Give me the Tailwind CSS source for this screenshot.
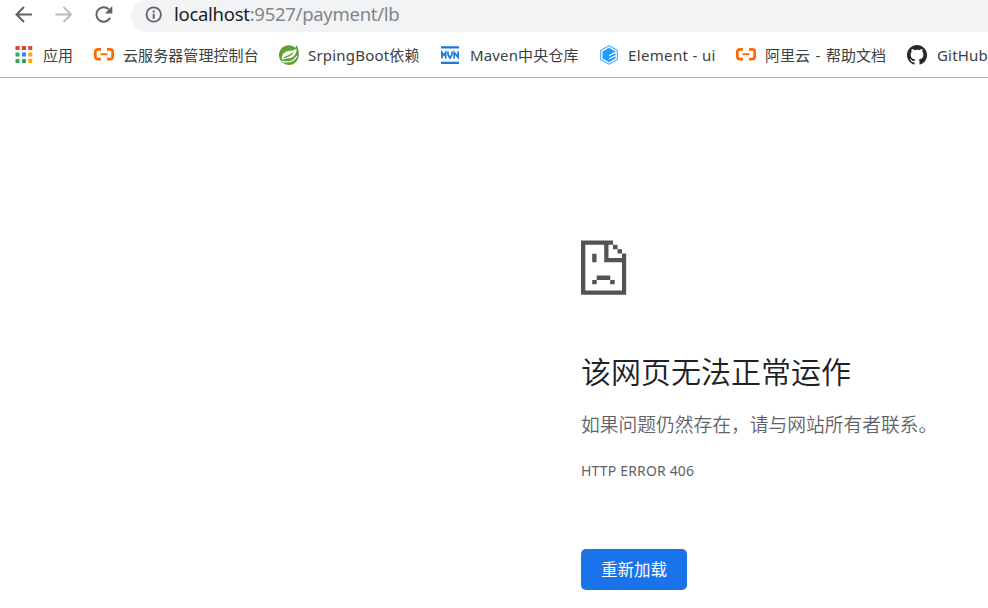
<!DOCTYPE html>
<html lang="zh-CN">
<head>
<meta charset="utf-8">
<title>localhost</title>
<script src="https://cdn.jsdelivr.net/npm/@tailwindcss/browser@4"></script>
</head>
<body class="h-[608px] w-[988px] overflow-hidden bg-white font-['Noto_Sans','Noto_Sans_CJK_SC',sans-serif]">
<header class="flex h-[78px] flex-col border-b border-[#b0b0b0]">
  <div class="flex h-8 shrink-0 items-start">
    <div class="flex w-[131px] shrink-0 items-center pl-3.5 pt-[5px]">
      <svg class="h-5 w-10" viewBox="0 0 40 20" fill="none" stroke="#5f6368" stroke-width="2"><path d="M18 9.500H2.800M10 2L2.500 9.500L10 17"/></svg>
      <svg class="h-5 w-10" viewBox="0 0 40 20" fill="none" stroke="#babcbe" stroke-width="2"><path d="M1.500 9.500H16.700M9.500 2L17 9.500L9.500 17"/></svg>
      <svg class="h-5 w-5" viewBox="0 0 20 20"><path d="M16.200 12.800A7.300 7.300 0 1 1 14.800 4.300" fill="none" stroke="#5f6368" stroke-width="2"/><path d="M18.300 1V8.500H10.800Z" fill="#5f6368"/></svg>
    </div>
    <div class="flex h-8 flex-1 items-start rounded-l-full bg-[#f1f3f4] pl-3.5">
      <svg class="mt-[6px] h-[18px] w-[18px]" viewBox="0 0 18 18"><circle cx="8.700" cy="8.500" r="7.200" fill="none" stroke="#5f6368" stroke-width="1.800"/><path d="M7.700 7.700h2v5h-2zM7.700 4.400h2v2h-2z" fill="#5f6368"/></svg>
      <div class="ml-[11px] whitespace-nowrap text-[18.5px] leading-[27px] tracking-[-0.28px] text-[#202124]">localhost<span class="text-[#80868b]">:9527/payment/lb</span></div>
    </div>
  </div>
  <nav class="flex h-[45px] shrink-0 items-center overflow-hidden whitespace-nowrap pl-[15px] text-[15px] text-[#3c4043]">
    <div class="flex w-[78px] shrink-0 items-center">
      <svg class="mr-[10px] h-[18px] w-[18px]" viewBox="0 0 18 18"><path fill="#ea4335" d="M.5 0h4v4h-4zM7 0h4v4H7zM13.300 0h4v4h-4z"/><path fill="#34a853" d="M.5 6.500h4v4h-4zM.5 13h4v4h-4zM7 13h4v4H7z"/><path fill="#1a8cff" d="M7 6.500h4v4H7z"/><path fill="#fbab00" d="M13.300 6.500h4v4h-4zM13.300 13h4v4h-4z"/></svg>
      <span class="pt-[2px]">应用</span>
    </div>
    <div class="flex w-[186px] shrink-0 items-center">
      <svg class="mr-[9px] h-[21px] w-[21px]" viewBox="0 0 21 21" fill="none" stroke="#ff6a00"><path stroke-width="2.700" d="M8 5.300H5Q2.300 5.300 2.300 8v4.500Q2.300 15.200 5 15.200H8M14 5.300h3q2.700 0 2.700 2.700v4.500q0 2.700-2.700 2.700h-3"/><path stroke-width="1.800" d="M7.500 10.200h7"/></svg>
      <span class="pt-[2px] tracking-[0.08px]">云服务器管理控制台</span>
    </div>
    <div class="flex w-[161px] shrink-0 items-center">
      <svg class="mr-[9px] h-5 w-5" viewBox="0 0 20 20"><path fill="#5fa135" d="M17.800.3c1.600 3 2.200 6.200 2 9.500C19.600 15.600 15.500 20 10 20c-2.500 0-4.800-1-6.500-2.500C1.300 15.700 0 13 0 10 0 4.500 4.300.2 9.700.2c2.600 0 5 1 6.600 2.500z"/><path d="M17.400 3.400c-2.200 2.600-6.500 2-9.900 3.200-4 1.500-5.600 5.200-3.900 8.200 1.700-1 4-.9 6.700-1.500 4.500-1 7.700-4.500 7.100-9.900z" fill="#fff"/><path d="M4 13.800c2-3.300 6.500-3.200 11.300-7.500-2.500 5.200-6.600 5.800-11.300 7.500z" fill="#5fa135"/><path d="M3.300 16.400c5.500 1.200 11.700.4 14.500-5.300" fill="none" stroke="#fff" stroke-width="1.200"/></svg>
      <span class="pt-[2px] tracking-[0.2px]">SrpingBoot依赖</span>
    </div>
    <div class="flex w-[159px] shrink-0 items-center">
      <svg class="mr-[10px] h-5 w-5" viewBox="0 0 20 20" fill="none" stroke="#1a78e0"><path stroke-width="2.400" d="M1 2.400h18M1 17.900h18"/><path stroke-width="1.700" d="M1.900 13.500V7.500l1.900 2.700 1.900-2.700v6M8 6.500v3l2 3.500 2-3.500v-3M14.200 13.500V7.500l3.900 4.800V6.300"/></svg>
      <span class="pt-[2px] tracking-[0.15px]">Maven中央仓库</span>
    </div>
    <div class="flex w-[136px] shrink-0 items-center">
      <svg class="mr-[9px] h-5 w-5" viewBox="0 0 20 20"><path d="M10 .8l8.300 4.500v9.400L10 19.200l-8.300-4.500V5.300z" fill="none" stroke="#45a5ff" stroke-width="1.100"/><path d="M10 2.800l6.500 3.600v7.200L10 17.200l-6.500-3.600V6.400z" fill="#209bff"/><path d="M16.800 6.600L10 9.900v1.400l6.800-3.300zM16.800 9.900L10 13.200v1.400l6.800-3.300z" fill="#fff"/></svg>
      <span class="pt-[2px] tracking-[0.35px]">Element - ui</span>
    </div>
    <div class="flex w-[172px] shrink-0 items-center">
      <svg class="mr-[9px] h-[21px] w-[21px]" viewBox="0 0 21 21" fill="none" stroke="#ff6a00"><path stroke-width="2.700" d="M8 5.300H5Q2.300 5.300 2.300 8v4.500Q2.300 15.200 5 15.200H8M14 5.300h3q2.700 0 2.700 2.700v4.500q0 2.700-2.700 2.700h-3"/><path stroke-width="1.800" d="M7.500 10.200h7"/></svg>
      <span class="pt-[2px] tracking-[0.05px] [word-spacing:1.5px]">阿里云 - 帮助文档</span>
    </div>
    <div class="flex w-[90px] shrink-0 items-center">
      <svg class="mr-[10px] h-5 w-5" viewBox="0 0 16 16" fill="#24292e"><path d="M8 0C3.580 0 0 3.580 0 8c0 3.540 2.290 6.530 5.470 7.590.4.070.55-.17.55-.38 0-.19-.01-.82-.01-1.490-2.010.37-2.530-.49-2.690-.94-.09-.23-.48-.94-.82-1.130-.28-.15-.68-.52-.01-.53.630-.01 1.080.58 1.230.82.720 1.210 1.870.87 2.330.66.070-.52.280-.87.510-1.070-1.780-.2-3.640-.89-3.640-3.950 0-.87.310-1.590.82-2.150-.08-.2-.36-1.020.08-2.120 0 0 .67-.21 2.200.82.640-.18 1.320-.27 2-.27s1.360.09 2 .27c1.530-1.040 2.200-.82 2.200-.82.440 1.100.16 1.920.08 2.120.51.560.82 1.270.82 2.150 0 3.070-1.870 3.750-3.650 3.950.29.25.54.73.54 1.480 0 1.070-.01 1.930-.01 2.200 0 .21.150.46.550.38A8.010 8.010 0 0 0 16 8c0-4.420-3.580-8-8-8z"/></svg>
      <span class="pt-[2px] tracking-[0.2px]">GitHub</span>
    </div>
  </nav>
</header>
<main class="flex flex-col items-start whitespace-nowrap pl-[581px] pt-[162px]">
  <svg class="h-[55px] w-[46px]" viewBox="0 0 46 55" fill="#535353"><path fill-rule="evenodd" d="M0 .5H32V4.800H27.500V18H41V13.500H45.200V54.700H0ZM4.300 4.800V50.500H41V22.300H23.200V4.800Z"/><path d="M32 4.800h4.500v4.500H32zM36.500 9.200H41v4.300h-4.500zM11.200 13.800h4.300v8.500h-4.300zM15.700 35.500h13.500v4.500H15.700zM11.200 40h4.500v4.200h-4.500zM29.200 40h4.500v4.200h-4.500z"/></svg>
  <h1 class="mt-[57px] text-[30px] font-[350] leading-[40px] text-[#202124]">该网页无法正常运作</h1>
  <p class="mt-[18px] text-[18.75px] font-[350] leading-[30px] text-[#5f6368]">如果问题仍然存在，请与网站所有者联系。</p>
  <p class="mt-[19px] text-[14px] leading-[24px] tracking-[0.17px] text-[#5f6368]">HTTP ERROR 406</p>
  <button class="mt-[66px] h-[41px] w-[106px] rounded-[5px] bg-[#1a73e8] pt-[2px] text-[16.5px] text-white">重新加载</button>
</main>
</body>
</html>
